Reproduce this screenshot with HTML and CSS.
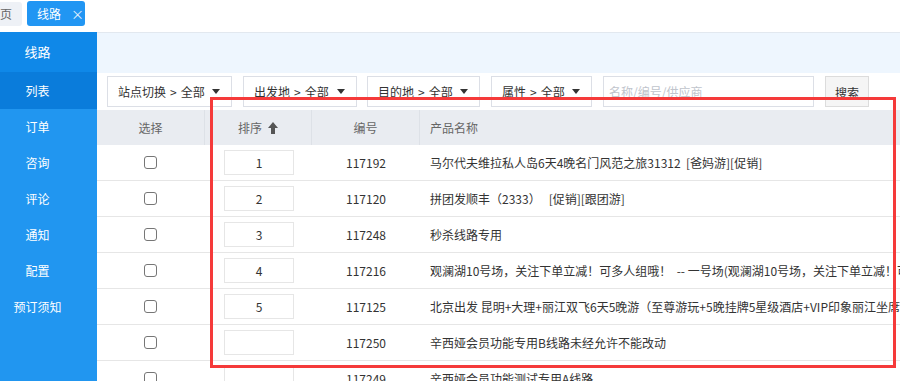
FILE: index.html
```html
<!DOCTYPE html>
<html lang="zh">
<head>
<meta charset="utf-8">
<link rel="stylesheet" href="styles.css">
</head>
<body>
<div class="app">
  <div class="tabs">
    <div class="tab tab-home">首页</div>
    <div class="tab tab-active">线路<span class="close">×</span></div>
  </div>
  <div class="layout">
    <nav class="side">
      <div class="side-title">线路</div>
      <div class="side-item current">列表</div>
      <div class="side-item">订单</div>
      <div class="side-item">咨询</div>
      <div class="side-item">评论</div>
      <div class="side-item">通知</div>
      <div class="side-item">配置</div>
      <div class="side-item">预订须知</div>
    </nav>
    <main class="main">
      <div class="topbar"></div>
      <div class="filters">
        <div class="sel w1">站点切换<span class="gt">&gt;</span>全部<span class="caret"></span></div>
        <div class="sel w2">出发地<span class="gt">&gt;</span>全部<span class="caret"></span></div>
        <div class="sel w3">目的地<span class="gt">&gt;</span>全部<span class="caret"></span></div>
        <div class="sel w4">属性<span class="gt">&gt;</span>全部<span class="caret"></span></div>
        <div class="search">名称/编号/供应商</div>
        <div class="btn">搜索</div>
      </div>
      <div class="table">
        <div class="row head">
          <div class="c c1">选择</div>
          <div class="c c2">排序 <svg class="up" width="10" height="12" viewBox="0 0 10 12"><path d="M5 0 L10 6 L7 6 L7 12 L3 12 L3 6 L0 6 Z" fill="#555"/></svg></div>
          <div class="c c3">编号</div>
          <div class="c c4">产品名称</div>
        </div>
        <div class="row">
          <div class="c c1"><span class="cb"></span></div>
          <div class="c c2"><span class="inp">1</span></div>
          <div class="c c3">117192</div>
          <div class="c c4">马尔代夫维拉私人岛6天4晚名门风范之旅31312&nbsp;&nbsp;[爸妈游][促销]</div>
        </div>
        <div class="row">
          <div class="c c1"><span class="cb"></span></div>
          <div class="c c2"><span class="inp">2</span></div>
          <div class="c c3">117120</div>
          <div class="c c4">拼团发顺丰（2333）&nbsp;&nbsp;&nbsp;[促销][跟团游]</div>
        </div>
        <div class="row">
          <div class="c c1"><span class="cb"></span></div>
          <div class="c c2"><span class="inp">3</span></div>
          <div class="c c3">117248</div>
          <div class="c c4">秒杀线路专用</div>
        </div>
        <div class="row">
          <div class="c c1"><span class="cb"></span></div>
          <div class="c c2"><span class="inp">4</span></div>
          <div class="c c3">117216</div>
          <div class="c c4">观澜湖10号场，关注下单立减！可多人组哦！&nbsp;&nbsp;-- 一号场(观澜湖10号场，关注下单立减！可多人组哦！)</div>
        </div>
        <div class="row">
          <div class="c c1"><span class="cb"></span></div>
          <div class="c c2"><span class="inp">5</span></div>
          <div class="c c3">117125</div>
          <div class="c c4">北京出发 昆明+大理+丽江双飞6天5晚游（至尊游玩+5晚挂牌5星级酒店+VIP印象丽江坐席）</div>
        </div>
        <div class="row">
          <div class="c c1"><span class="cb"></span></div>
          <div class="c c2"><span class="inp"></span></div>
          <div class="c c3">117250</div>
          <div class="c c4">辛西娅会员功能专用B线路未经允许不能改动</div>
        </div>
        <div class="row">
          <div class="c c1"><span class="cb"></span></div>
          <div class="c c2"><span class="inp"></span></div>
          <div class="c c3">117249</div>
          <div class="c c4">辛西娅会员功能测试专用A线路</div>
        </div>
      </div>
    </main>
  </div>
  <div class="mark"></div>
</div>
</body>
</html>
```

FILE: styles.css
```css
* { box-sizing: border-box; }
html, body { margin: 0; padding: 0; }
body {
  width: 900px;
  height: 381px;
  overflow: hidden;
  font-family: "Noto Sans CJK SC", "Noto Sans", sans-serif;
  font-size: 12px;
  color: #333;
  background: #fff;
}
.app { position: relative; width: 900px; height: 381px; overflow: hidden; }

.tabs {
  height: 32px;
  display: flex;
  align-items: flex-start;
  padding-top: 1px;
  gap: 5px;
}
.tab {
  height: 25px;
  line-height: 25px;
  padding: 0 10px;
  border-radius: 3px;
  font-size: 12px;
  white-space: nowrap;
}
.tab-home {
  background: #eef1f6;
  color: #666;
  margin-left: -22px;
  margin-top: 1px;
  height: 24px;
  line-height: 24px;
}
.tab-active {
  background: #2196f3;
  color: #fff;
  width: 58px;
}
.close { margin-left: 10px; font-size: 13px; color: #e6f2fd; }

.layout { display: flex; height: 349px; }
.side {
  width: 97px;
  flex: none;
  background: #2196f0;
  color: #fff;
}
.side-title {
  height: 40px;
  line-height: 40px;
  background: #0f88e8;
  text-align: center;
  padding-right: 22px;
  font-size: 13px;
}
.side-item {
  height: 36px;
  line-height: 36px;
  text-align: center;
  padding-right: 22px;
  font-size: 12px;
}
.side-item.current { background: #0a7cdb; height: 37px; line-height: 37px; }

.main { flex: 1; border-top: 1px solid #e2e8ef; }
.topbar { height: 40px; background: #eef6fe; }
.filters {
  height: 37px;
  display: flex;
  align-items: flex-start;
  padding: 3px 0 0 10px;
  gap: 10px;
}
.sel {
  height: 31px;
  border: 1px solid #dcdfe6;
  padding: 0 11px 0 10px;
  display: flex;
  align-items: center;
  white-space: nowrap;
  color: #333;
}
.gt { margin: 0 4px; }
.w1 { width: 125px; }
.w2 { width: 114px; margin-left: 1px; }
.w3 { width: 113px; }
.w4 { width: 101px; margin-left: 1px; }
.caret {
  width: 0; height: 0;
  border-left: 4px solid transparent;
  border-right: 4px solid transparent;
  border-top: 5px solid #333;
  margin-left: auto;
}
.search {
  width: 211px;
  height: 31px;
  line-height: 29px;
  border: 1px solid #dcdfe6;
  padding-left: 5px;
  color: #c0c4cc;
  margin-left: 1px;
}
.btn {
  width: 44px;
  height: 31px;
  line-height: 31px;
  border: 1px solid #dcdcdc;
  background: #f5f5f5;
  text-align: center;
  color: #333;
  margin-left: 1px;
}

.table { width: 803px; }
.row {
  display: flex;
  height: 36px;
  border-bottom: 1px solid #e6e6e6;
  align-items: center;
  white-space: nowrap;
}
.row.head {
  height: 35px;
  background: #e9ecf1;
  border-bottom: none;
  color: #666;
}
.c { height: 100%; display: flex; align-items: center; }
.c1 { width: 108px; justify-content: center; }
.c2 { width: 107px; justify-content: center; }
.c3 { width: 108px; justify-content: center; }
.c4 { flex: 1; padding-left: 10px; overflow: hidden; }
.head .c1, .head .c2, .head .c3 { border-right: 1px solid #dde1e7; }
.up { margin-left: 6px; }
.cb {
  width: 13px; height: 13px;
  border: 1px solid #767676;
  border-radius: 3px;
  background: #fff;
  margin-right: 1px;
}
.inp {
  width: 70px;
  height: 25px;
  border: 1px solid #e6e6e6;
  display: flex;
  align-items: center;
  justify-content: center;
  margin-left: 1px;
}

.mark {
  position: absolute;
  left: 210px;
  top: 97px;
  width: 686px;
  height: 271px;
  border: 3px solid #f53a3a;
  pointer-events: none;
}
```
